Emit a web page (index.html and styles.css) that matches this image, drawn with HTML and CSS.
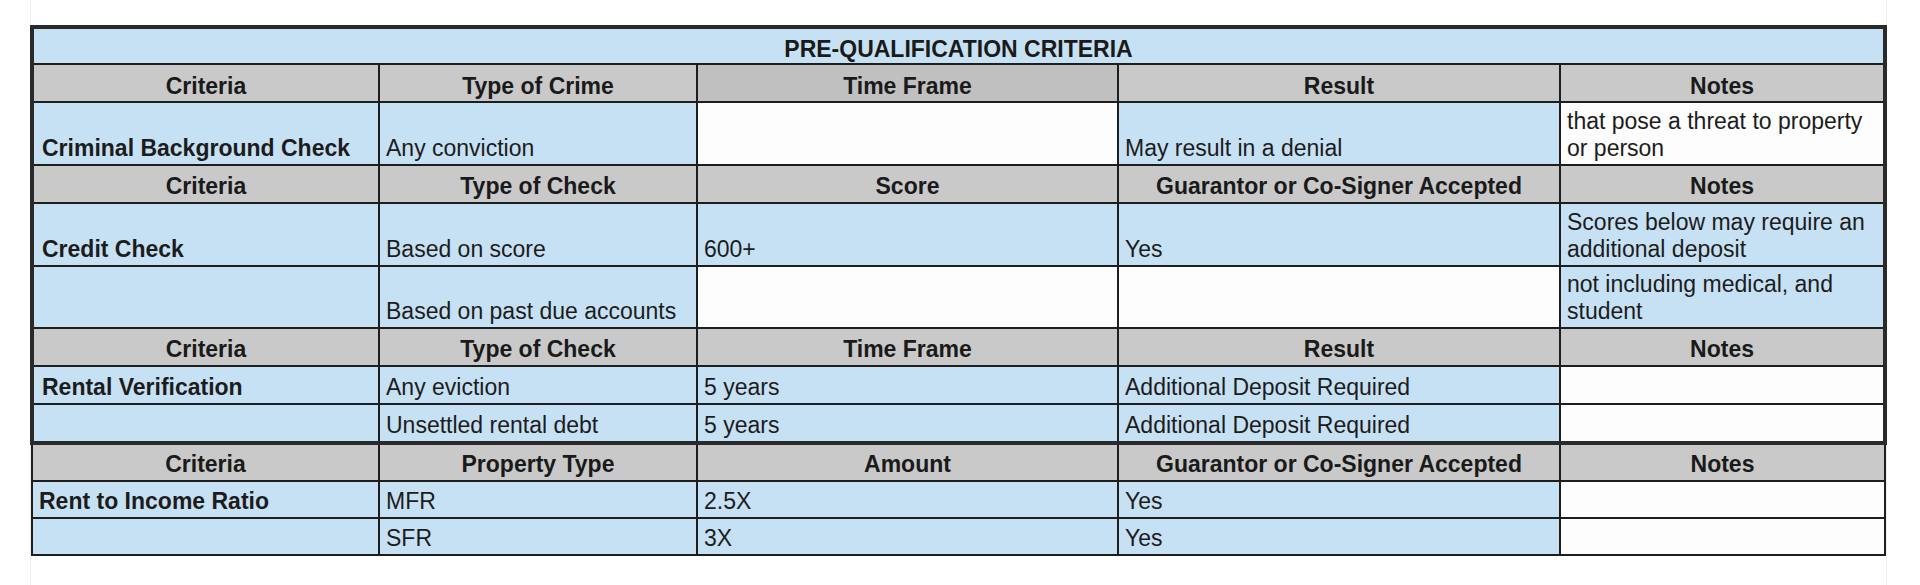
FILE: index.html
```html
<!DOCTYPE html>
<html lang="en">
<head>
<meta charset="utf-8">
<title>Pre-Qualification Criteria</title>
<link rel="stylesheet" href="styles.css">
</head>
<body>
<div class="sheet">
  <table class="grid main">
    <colgroup><col class="c1"><col class="c2"><col class="c3"><col class="c4"><col class="c5"></colgroup>
    <tr class="title"><th colspan="5">PRE-QUALIFICATION CRITERIA</th></tr>
    <tr class="head head1"><th>Criteria</th><th>Type of Crime</th><th class="dk">Time Frame</th><th>Result</th><th>Notes</th></tr>
    <tr class="tall"><td class="b">Criminal Background Check</td><td>Any conviction</td><td class="w"></td><td>May result in a denial</td><td class="w">that pose a threat to property or person</td></tr>
    <tr class="head"><th>Criteria</th><th>Type of Check</th><th>Score</th><th>Guarantor or Co-Signer Accepted</th><th>Notes</th></tr>
    <tr class="tall"><td class="b">Credit Check</td><td>Based on score</td><td>600+</td><td>Yes</td><td>Scores below may require an additional deposit</td></tr>
    <tr class="tall2"><td></td><td>Based on past due accounts</td><td class="w"></td><td class="w"></td><td>not including medical, and student</td></tr>
    <tr class="head"><th>Criteria</th><th>Type of Check</th><th>Time Frame</th><th>Result</th><th>Notes</th></tr>
    <tr class="row"><td class="b">Rental Verification</td><td>Any eviction</td><td>5 years</td><td>Additional Deposit Required</td><td class="w"></td></tr>
    <tr class="row"><td></td><td>Unsettled rental debt</td><td>5 years</td><td>Additional Deposit Required</td><td class="w"></td></tr>
  </table>
  <table class="grid last">
    <colgroup><col class="c1"><col class="c2"><col class="c3"><col class="c4"><col class="c5"></colgroup>
    <tr class="head first"><th>Criteria</th><th>Property Type</th><th>Amount</th><th>Guarantor or Co-Signer Accepted</th><th>Notes</th></tr>
    <tr class="row"><td class="b">Rent to Income Ratio</td><td>MFR</td><td>2.5X</td><td>Yes</td><td class="w"></td></tr>
    <tr class="row"><td></td><td>SFR</td><td>3X</td><td>Yes</td><td class="w"></td></tr>
  </table>
</div>
</body>
</html>
```

FILE: styles.css
```css
html, body {
  margin: 0;
  padding: 0;
  background: #ffffff;
}

body {
  font-family: "Liberation Sans", Arial, sans-serif;
  color: #1c1c1c;
  height: 585px;
  overflow: hidden;
}

.sheet {
  margin-left: 30px;
  padding-top: 25px;
  width: 1857px;
  min-height: 560px;
  box-shadow: inset 1px 0 0 #f1f1f1, inset -1px 0 0 #f1f1f1;
}

.grid {
  border-collapse: collapse;
  table-layout: fixed;
  font-size: 23px;
  line-height: 27px;
}

.grid.main {
  width: 1857px;
  border: 4px solid #2a2a2a;
}

.grid.last {
  width: 1855px;
  margin-left: 1px;
  border: 2px solid #222222;
  border-top: 0;
}

.c1 { width: 347px; }
.c2 { width: 318px; }
.c3 { width: 421px; }
.c4 { width: 442px; }
.c5 { width: 325px; }

.grid th,
.grid td {
  border: 2px solid #1e1e1e;
  padding: 0 6px 2px;
  vertical-align: bottom;
  text-align: left;
  background: #c7e1f4;
  overflow: hidden;
}

.grid th {
  font-weight: bold;
  text-align: center;
  color: #1a1a1a;
}

.grid .b {
  font-weight: bold;
  padding-left: 8px;
}

.grid.last .b {
  padding-left: 6px;
}

.grid .w {
  background: #fdfdfd;
}

.title th {
  background: #c7e1f4;
  padding-bottom: 0;
  height: 34px;
}

.head th {
  background: #c9c9c9;
  height: 34px;
}

.head1 th {
  padding-bottom: 1px;
  height: 35px;
}

.head th.dk {
  background: #c0c0c0;
}

.grid.last .first th {
  border-top: 0;
  height: 33px;
}

.tall td {
  height: 59px;
}

.tall2 td {
  height: 58px;
}

.row td {
  height: 34px;
}

.grid.last .row td {
  height: 33px;
}
```
